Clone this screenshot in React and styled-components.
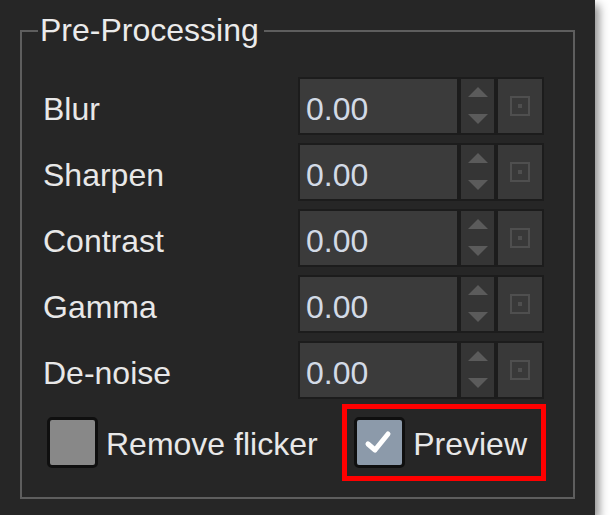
import React from "react"
import styled, { createGlobalStyle } from "styled-components"

const GlobalStyle = createGlobalStyle`
  html, body {
    margin: 0;
    padding: 0;
    background: #ffffff;
  }
  body {
    font-family: "Liberation Sans", Arial, sans-serif;
  }
`

const Panel = styled.div`
  width: 595px;
  height: 515px;
  box-sizing: border-box;
  padding: 12px 20px 16px 20px;
  background: #262626;
  box-shadow: 4px 5px 9px rgba(0, 0, 0, 0.45);
`

const Group = styled.fieldset`
  margin: 0;
  height: 100%;
  box-sizing: border-box;
  border: 2px solid #5e5e5e;
  padding: 28px 28px 0 21px;
  display: flex;
  flex-direction: column;
  gap: 8px;
`

const Title = styled.legend`
  margin-left: -5px;
  padding: 0 5px 0 2px;
  font-size: 32px;
  color: #ebebeb;
`

const Row = styled.div`
  display: grid;
  grid-template-columns: 255px 246px;
  align-items: center;
  height: 58px;
`

const Label = styled.span`
  font-size: 32px;
  color: #e8e8e8;
  padding-top: 6px;
`

const SpinBox = styled.div`
  display: flex;
  gap: 4px;
  height: 100%;
  box-sizing: border-box;
  padding: 2px;
  background: #1c1c1c;
`

const Field = styled.div`
  width: 157px;
  display: flex;
  align-items: center;
  padding: 6px 0 0 6px;
  box-sizing: border-box;
  background: #3b3b3b;
  font-size: 32px;
  color: #d2dae6;
`

const Arrows = styled.div`
  width: 33px;
  display: flex;
  flex-direction: column;
  align-items: center;
  justify-content: space-between;
  padding: 8px 0 9px;
  box-sizing: border-box;
  background: #353535;
`

const Reset = styled.div`
  width: 44px;
  display: flex;
  align-items: center;
  justify-content: center;
  background: #393939;
`

const CheckRow = styled.div`
  display: flex;
  justify-content: space-between;
  align-items: center;
  margin-top: -3px;
`

const CheckItem = styled.label`
  display: flex;
  align-items: center;
  gap: 8px;
  box-sizing: border-box;
  padding: ${({ $marked }) => ($marked ? "8px 14px 8px 7px" : "0 0 0 4px")};
  border: ${({ $marked }) => ($marked ? "5px solid #ff0000" : "none")};
  margin-right: ${({ $marked }) => ($marked ? "-1px" : "0")};
  font-size: 32px;
  color: #e8e8e8;
`

const Box = styled.span`
  width: 51px;
  height: 51px;
  box-sizing: border-box;
  border: 3px solid #0f0f0f;
  border-radius: 5px;
  background: ${({ $checked }) => ($checked ? "#8c9aaa" : "#888888")};
  display: flex;
`

const CheckText = styled.span`
  padding-top: 4px;
`

const Triangle = ({ down }) => (
  <svg width="20" height="10" viewBox="0 0 20 10">
    <path d={down ? "M0 0 H20 L10 10 Z" : "M10 0 L20 10 H0 Z"} fill="#5b5b5b" />
  </svg>
)

const ResetIcon = () => (
  <svg width="20" height="20" viewBox="0 0 20 20">
    <rect x="1" y="1" width="18" height="18" fill="none" stroke="#4f4f4f" strokeWidth="2" />
    <rect x="8" y="8" width="4" height="4" fill="#4f4f4f" />
  </svg>
)

const CheckMark = () => (
  <svg width="45" height="45" viewBox="0 0 45 45">
    <path
      d="M11 24 L18 30 L31 14"
      fill="none"
      stroke="#ffffff"
      strokeWidth="5"
      strokeLinecap="round"
      strokeLinejoin="round"
    />
  </svg>
)

const params = ["Blur", "Sharpen", "Contrast", "Gamma", "De-noise"]

const App = () => (
  <>
    <GlobalStyle />
    <Panel>
      <Group>
        <Title>Pre-Processing</Title>
        {params.map(name => (
          <Row key={name}>
            <Label>{name}</Label>
            <SpinBox>
              <Field>0.00</Field>
              <Arrows>
                <Triangle />
                <Triangle down />
              </Arrows>
              <Reset>
                <ResetIcon />
              </Reset>
            </SpinBox>
          </Row>
        ))}
        <CheckRow>
          <CheckItem>
            <Box />
            <CheckText>Remove flicker</CheckText>
          </CheckItem>
          <CheckItem $marked>
            <Box $checked>
              <CheckMark />
            </Box>
            <CheckText>Preview</CheckText>
          </CheckItem>
        </CheckRow>
      </Group>
    </Panel>
  </>
)

export default App
